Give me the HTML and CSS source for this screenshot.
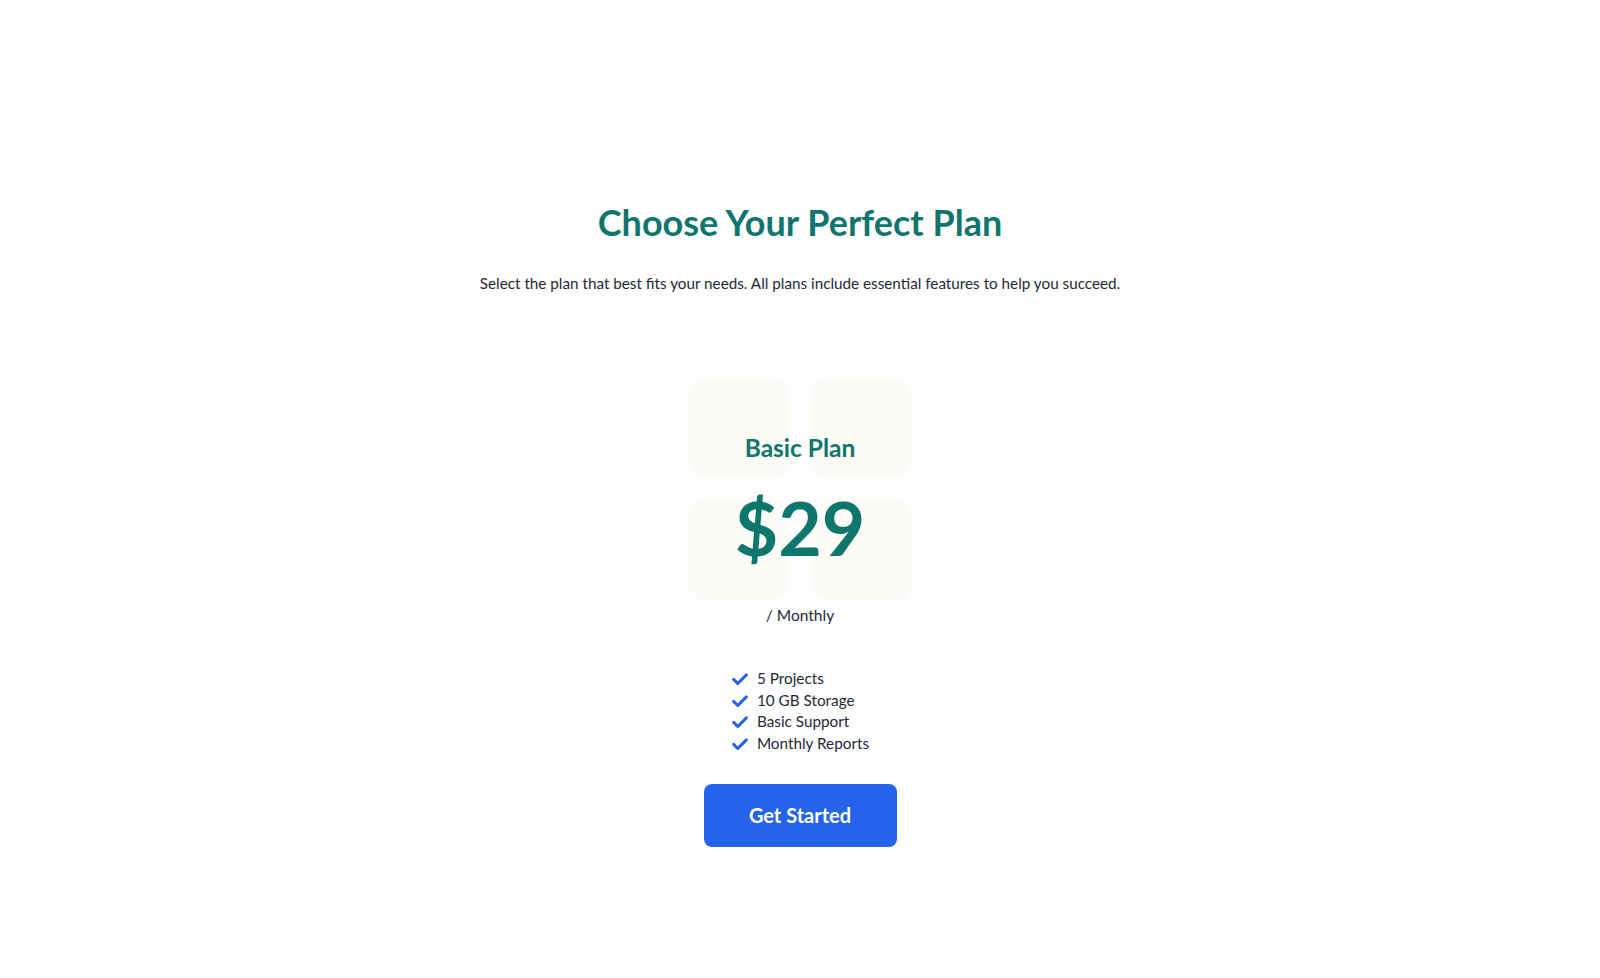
FILE: index.html
```html
<!DOCTYPE html>
<html lang="en">
<head>
    <meta charset="UTF-8">
    <meta name="viewport" content="width=device-width, initial-scale=1.0">
    <title>Pricing</title>
    <link rel="stylesheet" href="styles.css">
</head>
<body>
    <main class="page">
        <h1 class="title">Choose Your Perfect Plan</h1>
        <p class="lead">Select the plan that best fits your needs. All plans include essential features to help you succeed.</p>

        <section class="plan">
            <div class="plan-tiles">
                <span class="tile"></span>
                <span class="tile"></span>
                <span class="tile"></span>
                <span class="tile"></span>
            </div>
            <div class="plan-body">
                <h2 class="plan-name">Basic Plan</h2>
                <div class="plan-price">$29</div>
                <div class="plan-period">/ Monthly</div>
                <ul class="features">
                    <li class="feature">
                        <svg class="check" viewBox="0 0 24 24"><polyline points="3.5 12.5 9 18 20.5 6.5"/></svg>
                        <span>5 Projects</span>
                    </li>
                    <li class="feature">
                        <svg class="check" viewBox="0 0 24 24"><polyline points="3.5 12.5 9 18 20.5 6.5"/></svg>
                        <span>10 GB Storage</span>
                    </li>
                    <li class="feature">
                        <svg class="check" viewBox="0 0 24 24"><polyline points="3.5 12.5 9 18 20.5 6.5"/></svg>
                        <span>Basic Support</span>
                    </li>
                    <li class="feature">
                        <svg class="check" viewBox="0 0 24 24"><polyline points="3.5 12.5 9 18 20.5 6.5"/></svg>
                        <span>Monthly Reports</span>
                    </li>
                </ul>
                <a class="button" href="javascript:void(0)">Get Started</a>
            </div>
        </section>
    </main>
</body>
</html>
```

FILE: styles.css
```css
html {
    box-sizing: border-box;
}
*, *::before, *::after {
    box-sizing: inherit;
}
body {
    margin: 0;

    font-family: "Lato", "Noto Sans", sans-serif;
    color      : #1f2937;
    background : #fff;
}
.page {
    display       : flex;
    flex-direction: column;
    align-items   : center;
    padding-top   : 201px;
}
.title {
    margin     : 0;
    font-size  : 36px;
    line-height: 43px;
    font-weight: 700;
    color      : #0f766e;
}
.lead {
    margin     : 27px 0 0;
    font-size  : 15.25px;
    line-height: 24px;
}
.plan {
    position  : relative;
    width     : 224px;
    margin-top: 83px;
}
.plan-tiles {
    position: absolute;
    top     : 0;
    left    : 0;
    z-index : -1;

    display: grid;
    grid-template-columns: 100px 100px;
    grid-template-rows   : 100px 100px;
    gap: 22px 24px;
}
.tile {
    border-radius   : 18px;
    background-color: #fcfbf6;
}
.plan-body {
    display       : flex;
    flex-direction: column;
    align-items   : center;
    padding-top   : 54px;
}
.plan-name {
    margin     : 0;
    font-size  : 24.5px;
    line-height: 32px;
    font-weight: 700;
    color      : #0f766e;
}
.plan-price {
    margin-top : 26px;
    font-size  : 75px;
    line-height: 74px;
    font-weight: 700;
    color      : #0f766e;
}
.plan-period {
    margin-top : 39px;
    font-size  : 15.5px;
    line-height: 24px;
}
.features {
    margin : 41px 0 0;
    padding: 0;
    list-style: none;
}
.feature {
    display    : flex;
    align-items: center;
    gap        : 8px;
    font-size  : 15.3px;
    line-height: 21.7px;
}
.check {
    width : 18px;
    height: 18px;

    fill           : none;
    stroke         : #2563eb;
    stroke-width   : 4;
    stroke-linecap : round;
    stroke-linejoin: round;
}
.button {
    display   : block;
    margin-top: 29px;
    width     : 193px;
    height    : 63px;

    color           : #fff;
    background-color: #2563eb;
    border-radius   : 8px;

    font-size      : 20px;
    font-weight    : 700;
    line-height    : 63px;
    text-align     : center;
    text-decoration: none;
}
```
